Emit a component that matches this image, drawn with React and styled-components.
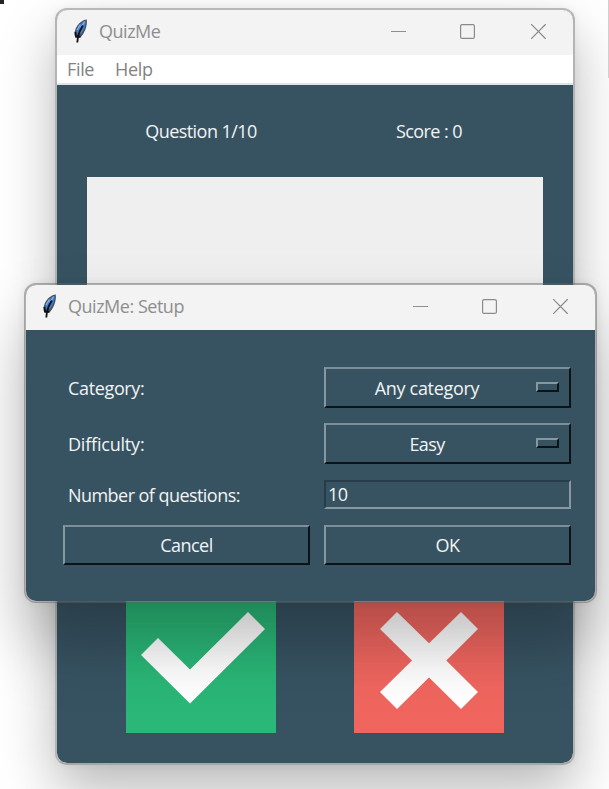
import React from 'react';
import styled, { createGlobalStyle } from 'styled-components';

const SLATE = '#375362';

const GlobalStyle = createGlobalStyle`
  * { box-sizing: border-box; }
  html, body { margin: 0; padding: 0; overflow: hidden; }
  body { background: #fff; font-family: "Open Sans", "Noto Sans", sans-serif; }
`;

const Desktop = styled.main`
  position: relative;
  width: 609px;
  height: 789px;
  overflow: hidden;
  background: #fff;
`;

const CornerMark = styled.div`
  position: absolute;
  top: 0;
  left: 0;
  width: 4px;
  height: 4px;
  background: #252525;
`;

const EdgeLine = styled.div`
  position: absolute;
  top: 0;
  right: 0;
  width: 1px;
  height: 78px;
  background: #d0d0d0;
`;

const Window = styled.section`
  position: absolute;
  display: flex;
  flex-direction: column;
  overflow: hidden;
  border: 2px solid;
  border-radius: 12px;
  background-color: ${SLATE};
  background-clip: padding-box;
`;

const MainWindow = styled(Window)`
  left: 55px;
  top: 8px;
  width: 520px;
  height: 757px;
  border-color: #b9b9b9 #b4b4b4 #a6a6a6;
  box-shadow: 0 26px 56px rgba(0, 0, 0, 0.28), 0 0 8px rgba(0, 0, 0, 0.06);
`;

const SetupWindow = styled(Window)`
  left: 24px;
  top: 283px;
  width: 573px;
  height: 320px;
  border-color: rgba(100, 98, 98, 0.47);
  box-shadow: 0 40px 66px rgba(0, 0, 0, 0.26), 0 0 8px rgba(0, 0, 0, 0.06);
`;

const TitleBar = styled.header`
  display: flex;
  align-items: center;
  flex: none;
  height: 45px;
  padding: 0 27px 0 15px;
  background: #f3f3f3;
`;

const Title = styled.h1`
  flex: 1;
  margin: -3px 0 0 10px;
  font-size: 18px;
  line-height: 24px;
  font-weight: 400;
  letter-spacing: -0.48px;
  color: #8e8e8e;
`;

const Controls = styled.div`
  display: flex;
  align-items: center;
  gap: 54px;
  margin-top: -2px;
`;

const Glyph = styled.svg`
  display: block;
  flex: none;
`;

const FeatherIcon = styled(Glyph)`
  margin-top: -4px;
`;

const MenuBar = styled.nav`
  display: flex;
  align-items: center;
  flex: none;
  gap: 21px;
  height: 30px;
  padding-left: 10px;
  background: #fff;
  border-bottom: 2px solid #dfe4e6;
`;

const MenuItem = styled.span`
  font-size: 18px;
  line-height: 28px;
  letter-spacing: -0.35px;
  color: #828282;
`;

const QuizBody = styled.div`
  display: flex;
  flex-direction: column;
  flex: 1;
  padding: 0 30px 30px;
`;

const Status = styled.div`
  display: grid;
  grid-template-columns: 1fr 1fr;
  align-items: center;
  height: 92px;
  text-align: center;
`;

const Label = styled.span`
  font-size: 18px;
  line-height: 24px;
  letter-spacing: ${(p) => p.$spacing || '-0.55px'};
  white-space: nowrap;
  color: #f2f4f5;
`;

const QuestionCanvas = styled.div`
  flex: 1;
  margin-bottom: 30px;
  background: #efefef;
`;

const Answers = styled.div`
  display: grid;
  grid-template-columns: 1fr 1fr;
  justify-items: center;
  height: 150px;
`;

const AnswerButton = styled.button`
  width: 150px;
  height: 150px;
  padding: 0;
  border: 0;
  background: ${(p) => p.$color};
`;

const SetupForm = styled.div`
  display: grid;
  grid-template-columns: 247px 247px;
  grid-template-rows: 41px 41px 31px 40px;
  column-gap: 14px;
  align-content: start;
  padding: 37px 0 0 37px;
  row-gap: 15px;
`;

const FieldName = styled(Label)`
  align-self: center;
  padding-left: 5px;
`;

const Raised = styled.button`
  display: flex;
  align-items: center;
  justify-content: center;
  min-width: 0;
  padding: 0 0 1px;
  border: 2px solid;
  border-color: #7c8e98 #0d1316 #0d1316 #8798a1;
  background: ${SLATE};
  font-family: inherit;
`;

const Select = styled(Raised)`
  padding: 0 10px 0 0;
`;

const SelectValue = styled(Label)`
  flex: 1;
  padding-right: 8px;
  text-align: center;
`;

const Indicator = styled.span`
  width: 23px;
  height: 10px;
  margin-top: -2px;
  border: 2px solid;
  border-color: #8798a1 #0d1316 #0d1316 #8798a1;
`;

const Entry = styled.div`
  display: flex;
  align-items: center;
  align-self: center;
  height: 29px;
  padding: 0 0 1px 2px;
  border: 2px solid;
  border-color: #283d49 #8798a1 #8798a1 #283d49;
  background: ${SLATE};
`;

const Feather = () => (
  <FeatherIcon width="17" height="26" viewBox="0 0 17 26" aria-hidden="true">
    <path d="M14.8 1.5 C10.5 1.8 6 5.5 3.7 10.5 C2.3 14 2.2 17 3.4 19.5 L8 20 C12 16 15.6 9 14.8 1.5Z" fill="#4a5058" />
    <path d="M13.6 2.8 C9.5 4 6 8 4.6 12 L4.4 16.5 L9.5 15.5 C12.5 11.5 14 7 13.6 2.8Z" fill="#3d7bcb" />
    <path d="M12.8 3.6 L8.5 9.5 M8.3 6.6 L5 12.2" stroke="#7db0ea" strokeWidth="1.3" fill="none" />
    <path d="M10.8 7.5 L7.6 13.5 L6 18.5 L5.3 24.5 M3.4 14 L4 18.6 L8.4 18.6" stroke="#0e1014" strokeWidth="1.8" fill="none" />
  </FeatherIcon>
);

const WindowControls = () => (
  <Controls>
    <Glyph width="15" height="15" viewBox="0 0 15 15" stroke="#8f8f8f">
      <path d="M0 7.5H15" />
    </Glyph>
    <Glyph width="15" height="15" viewBox="0 0 15 15" stroke="#8a8a8a" fill="none">
      <rect x="0.6" y="0.6" width="13.8" height="13.8" rx="1.5" strokeWidth="1.2" />
    </Glyph>
    <Glyph width="17" height="15" viewBox="0 0 17 15" stroke="#8a8a8a">
      <path d="M2.2 0.2L16.6 14.8M16.6 0.2L2.2 14.8" strokeWidth="1.2" />
    </Glyph>
  </Controls>
);

const OptionMenu = ({ value, spacing }) => (
  <Select>
    <SelectValue $spacing={spacing}>{value}</SelectValue>
    <Indicator />
  </Select>
);

export default function App() {
  return (
    <>
      <GlobalStyle />
      <Desktop>
        <MainWindow>
          <TitleBar>
            <Feather />
            <Title>QuizMe</Title>
            <WindowControls />
          </TitleBar>
          <MenuBar>
            <MenuItem>File</MenuItem>
            <MenuItem>Help</MenuItem>
          </MenuBar>
          <QuizBody>
            <Status>
              <Label>Question 1/10</Label>
              <Label>Score : 0</Label>
            </Status>
            <QuestionCanvas />
            <Answers>
              <AnswerButton $color="#2ab777" aria-label="True">
                <Glyph width="150" height="150" viewBox="0 0 150 150" fill="#fff">
                  <path d="M15 72L32 55L64 86.5L122 29L139 46L64 120.5Z" />
                </Glyph>
              </AnswerButton>
              <AnswerButton $color="#f0665f" aria-label="False">
                <Glyph width="150" height="150" viewBox="0 0 150 150" fill="#fff">
                  <path d="M43 29L75 60.3L107 29L124 46L92.3 77.5L124 109L107 126L75 94.5L43 126L26 109L58 77.5L26 46Z" />
                </Glyph>
              </AnswerButton>
            </Answers>
          </QuizBody>
        </MainWindow>
        <SetupWindow>
          <TitleBar>
            <Feather />
            <Title>QuizMe: Setup</Title>
            <WindowControls />
          </TitleBar>
          <SetupForm>
            <FieldName $spacing="-0.35px">Category:</FieldName>
            <OptionMenu value="Any category" spacing="-0.3px" />
            <FieldName $spacing="-0.2px">Difficulty:</FieldName>
            <OptionMenu value="Easy" spacing="-0.6px" />
            <FieldName>Number of questions:</FieldName>
            <Entry><Label>10</Label></Entry>
            <Raised><Label>Cancel</Label></Raised>
            <Raised><Label>OK</Label></Raised>
          </SetupForm>
        </SetupWindow>
        <CornerMark />
        <EdgeLine />
      </Desktop>
    </>
  );
}
